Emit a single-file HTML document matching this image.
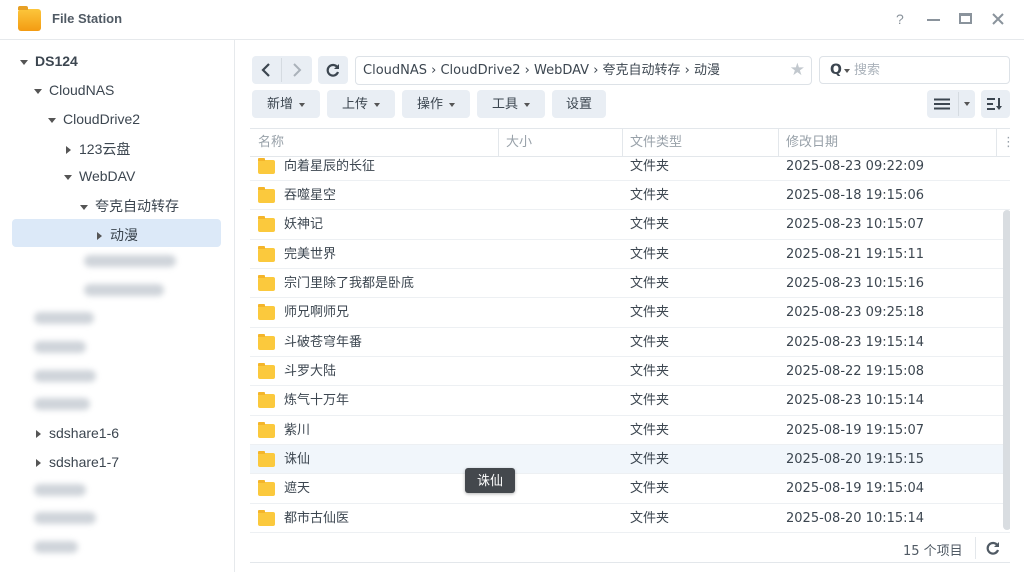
<!DOCTYPE html>
<html><head><meta charset="utf-8"><style>
*{margin:0;padding:0;box-sizing:border-box}
body{width:1024px;height:572px;overflow:hidden;background:#fff;font-family:"Liberation Sans","Noto Sans CJK SC",sans-serif;color:#505a64;position:relative}
.abs{position:absolute}
.dv{font-family:"DejaVu Sans","Noto Sans CJK SC",sans-serif}
.title{left:0;top:0;width:1024px;height:40px;border-bottom:1px solid #e6e9ec}
.side{left:0;top:40px;width:235px;height:532px;border-right:1px solid #e6e9ec}
.tr{position:absolute;font-size:14px;color:#3c4650;white-space:nowrap}
.tri{display:inline-block;width:0;height:0;border-left:4px solid transparent;border-right:4px solid transparent;border-top:5px solid #555;margin-right:7px;vertical-align:middle}
.trr{display:inline-block;width:0;height:0;border-top:4px solid transparent;border-bottom:4px solid transparent;border-left:5px solid #555;margin-right:8px;vertical-align:middle}
.blur{position:absolute;height:12px;background:#cfd4da;border-radius:6px;filter:blur(3px)}
.btn{position:absolute;height:28px;background:#e9eef4;border-radius:4px;font-size:13px;color:#3c4650;text-align:center;line-height:28px}
.car{display:inline-block;border-left:3px solid transparent;border-right:3px solid transparent;border-top:4px solid #555;vertical-align:middle;margin-left:6px}
.row{position:absolute;left:250px;width:760px;height:29.33px;border-bottom:1px solid #edf0f3;font-size:13px;color:#3c4650;line-height:29px}
.row span{position:absolute}
.fold{position:absolute;left:8px;top:8px;width:17px;height:14px;background:#fbc93d;border-radius:2px}
.fold:before{content:"";position:absolute;left:0;top:-2px;width:7px;height:3px;background:#f4b52a;border-radius:1px 1px 0 0}
</style></head><body>
<div class="abs title">
 <div class="abs" style="left:18px;top:9px;width:23px;height:22px;background:linear-gradient(#fcc63c,#f39b12);border-radius:3px"></div>
 <div class="abs" style="left:18px;top:6px;width:10px;height:4px;background:#e7a024;border-radius:2px 2px 0 0"></div>
 <div class="abs" style="left:52px;top:11px;font-size:13px;font-weight:bold;color:#505a64">File Station</div>
 <div class="abs" style="left:896px;top:11px;font-size:14px;color:#8a939c">?</div>
 <div class="abs" style="left:927px;top:19px;width:13px;height:2px;background:#8a939c"></div>
 <div class="abs" style="left:959px;top:13px;width:13px;height:11px;border:2px solid #8a939c;border-top-width:3px"></div>
 <svg class="abs" style="left:992px;top:13px" width="12" height="12"><path d="M1 1L11 11M11 1L1 11" stroke="#8a939c" stroke-width="2"/></svg>
</div>
<div class="abs side">
 <div class="tr" style="left:20px;top:13px;font-weight:bold;font-size:14px"><span class="tri"></span>DS124</div>
 <div class="tr" style="left:34px;top:42px"><span class="tri"></span>CloudNAS</div>
 <div class="tr" style="left:48px;top:71px"><span class="tri"></span>CloudDrive2</div>
 <div class="tr" style="left:66px;top:99px"><span class="trr"></span>123云盘</div>
 <div class="tr" style="left:64px;top:128px"><span class="tri"></span>WebDAV</div>
 <div class="tr" style="left:80px;top:156px"><span class="tri"></span>夸克自动转存</div>
 <div class="abs" style="left:12px;top:179px;width:209px;height:28px;background:#dce9f8;border-radius:4px"></div>
 <div class="tr" style="left:97px;top:185px"><span class="trr"></span>动漫</div>
 <div class="blur" style="left:84px;top:215px;width:92px"></div>
 <div class="blur" style="left:84px;top:244px;width:80px"></div>
 <div class="blur" style="left:34px;top:272px;width:60px"></div>
 <div class="blur" style="left:34px;top:301px;width:52px"></div>
 <div class="blur" style="left:34px;top:330px;width:62px"></div>
 <div class="blur" style="left:34px;top:358px;width:56px"></div>
 <div class="tr" style="left:36px;top:385px"><span class="trr"></span>sdshare1-6</div>
 <div class="tr" style="left:36px;top:414px"><span class="trr"></span>sdshare1-7</div>
 <div class="blur" style="left:34px;top:444px;width:52px"></div>
 <div class="blur" style="left:34px;top:472px;width:62px"></div>
 <div class="blur" style="left:34px;top:501px;width:44px"></div>
</div>
<div class="btn" style="left:252px;top:56px;width:60px;"></div>
<div class="abs" style="left:281px;top:58px;width:1px;height:24px;background:#d5dbe1"></div>
<svg class="abs" style="left:260px;top:63px" width="12" height="14"><path d="M9 1L3 7L9 13" fill="none" stroke="#3c4650" stroke-width="2.2"/></svg>
<svg class="abs" style="left:291px;top:63px" width="12" height="14"><path d="M3 1L9 7L3 13" fill="none" stroke="#aab2ba" stroke-width="2"/></svg>
<div class="btn" style="left:318px;top:56px;width:30px"></div>
<svg class="abs" style="left:326px;top:63px" width="14" height="14"><path d="M11.5 4.5A5.3 5.3 0 1 0 12 9" fill="none" stroke="#3c4650" stroke-width="2.2"/><path d="M13 1V6H8Z" fill="#3c4650"/></svg>
<div class="abs dv" style="left:355px;top:56px;width:457px;height:29px;border:1px solid #dde2e7;border-radius:4px;font-size:13px;color:#3c4650;line-height:27px;padding-left:7px;white-space:nowrap">CloudNAS › CloudDrive2 › WebDAV › 夸克自动转存 › 动漫<span style="position:absolute;right:6px;top:0;color:#c2c8ce;font-size:17px">★</span></div>
<div class="abs dv" style="left:819px;top:56px;width:191px;height:28px;border:1px solid #dde2e7;border-radius:4px;font-size:13px;color:#aab2ba;line-height:26px;padding-left:10px"><b style="color:#3c4650;font-size:14px">Q</b><span class="car" style="margin-left:2px"></span> 搜索</div>
<div class="btn" style="left:252px;top:90px;width:68px">新增<span class="car"></span></div>
<div class="btn" style="left:327px;top:90px;width:68px">上传<span class="car"></span></div>
<div class="btn" style="left:402px;top:90px;width:68px">操作<span class="car"></span></div>
<div class="btn" style="left:477px;top:90px;width:68px">工具<span class="car"></span></div>
<div class="btn" style="left:552px;top:90px;width:54px">设置</div>
<div class="btn" style="left:927px;top:90px;width:48px"></div>
<svg class="abs" style="left:934px;top:98px" width="16" height="12"><path d="M0 1.5H16M0 6H16M0 10.5H16" stroke="#3c4650" stroke-width="2"/></svg>
<div class="abs" style="left:958px;top:92px;width:1px;height:24px;background:#d5dbe1"></div>
<span class="car abs" style="left:958px;top:102px"></span>
<div class="btn" style="left:981px;top:90px;width:29px"></div>
<svg class="abs" style="left:987px;top:97px" width="17" height="14"><path d="M0 2H8M0 7H6M0 12H8" stroke="#3c4650" stroke-width="2"/><path d="M12 1V10" stroke="#3c4650" stroke-width="2"/><path d="M9 9H15L12 13Z" fill="#3c4650"/></svg>
<div class="abs dv" style="left:250px;top:128px;width:760px;height:29px;border-top:1px solid #e3e7eb;border-bottom:1px solid #e3e7eb;font-size:13px;color:#98a1a9;line-height:28px">
 <span class="abs" style="left:8px">名称</span><span class="abs" style="left:248px;top:0;width:1px;height:28px;background:#e3e7eb"></span>
 <span class="abs" style="left:256px">大小</span><span class="abs" style="left:372px;top:0;width:1px;height:28px;background:#e3e7eb"></span>
 <span class="abs" style="left:380px">文件类型</span><span class="abs" style="left:528px;top:0;width:1px;height:28px;background:#e3e7eb"></span>
 <span class="abs" style="left:536px">修改日期</span><span class="abs" style="left:746px;top:0;width:1px;height:28px;background:#e3e7eb"></span>
 <span class="abs" style="left:752px">⋮</span>
</div>
<div class="abs dv" style="left:250px;top:157px;width:760px;height:376px;overflow:hidden">
<div style="position:relative;top:-5.3px">
<div class="row" style="left:0;top:0"><i class="fold"></i><span style="left:34px">向着星辰的长征</span><span style="left:380px">文件夹</span><span style="left:536px">2025-08-23 09:22:09</span></div>
<div class="row" style="left:0;top:29.33px"><i class="fold"></i><span style="left:34px">吞噬星空</span><span style="left:380px">文件夹</span><span style="left:536px">2025-08-18 19:15:06</span></div>
<div class="row" style="left:0;top:58.67px"><i class="fold"></i><span style="left:34px">妖神记</span><span style="left:380px">文件夹</span><span style="left:536px">2025-08-23 10:15:07</span></div>
<div class="row" style="left:0;top:88px"><i class="fold"></i><span style="left:34px">完美世界</span><span style="left:380px">文件夹</span><span style="left:536px">2025-08-21 19:15:11</span></div>
<div class="row" style="left:0;top:117.33px"><i class="fold"></i><span style="left:34px">宗门里除了我都是卧底</span><span style="left:380px">文件夹</span><span style="left:536px">2025-08-23 10:15:16</span></div>
<div class="row" style="left:0;top:146.67px"><i class="fold"></i><span style="left:34px">师兄啊师兄</span><span style="left:380px">文件夹</span><span style="left:536px">2025-08-23 09:25:18</span></div>
<div class="row" style="left:0;top:176px"><i class="fold"></i><span style="left:34px">斗破苍穹年番</span><span style="left:380px">文件夹</span><span style="left:536px">2025-08-23 19:15:14</span></div>
<div class="row" style="left:0;top:205.33px"><i class="fold"></i><span style="left:34px">斗罗大陆</span><span style="left:380px">文件夹</span><span style="left:536px">2025-08-22 19:15:08</span></div>
<div class="row" style="left:0;top:234.67px"><i class="fold"></i><span style="left:34px">炼气十万年</span><span style="left:380px">文件夹</span><span style="left:536px">2025-08-23 10:15:14</span></div>
<div class="row" style="left:0;top:264px"><i class="fold"></i><span style="left:34px">紫川</span><span style="left:380px">文件夹</span><span style="left:536px">2025-08-19 19:15:07</span></div>
<div class="row" style="left:0;top:293.33px;background:#f1f6fb"><i class="fold"></i><span style="left:34px">诛仙</span><span style="left:380px">文件夹</span><span style="left:536px">2025-08-20 19:15:15</span></div>
<div class="row" style="left:0;top:322.67px"><i class="fold"></i><span style="left:34px">遮天</span><span style="left:380px">文件夹</span><span style="left:536px">2025-08-19 19:15:04</span></div>
<div class="row" style="left:0;top:352px"><i class="fold"></i><span style="left:34px">都市古仙医</span><span style="left:380px">文件夹</span><span style="left:536px">2025-08-20 10:15:14</span></div>
</div>
<div class="abs" style="left:753px;top:53px;width:8px;height:320px;background:#d9dde1;border-radius:4px"></div>
</div>
<div class="abs" style="left:465px;top:468px;width:50px;height:25px;background:#44484d;border-radius:3px;color:#fff;font-size:13px;line-height:25px;text-align:center;box-shadow:0 1px 3px rgba(0,0,0,.3)">诛仙</div>
<div class="abs dv" style="left:903px;top:540px;font-size:13px;color:#505a64">15 个项目</div>
<div class="abs" style="left:975px;top:537px;width:1px;height:22px;background:#e3e7eb"></div>
<svg class="abs" style="left:986px;top:541px" width="14" height="14"><path d="M11.5 4.5A5.3 5.3 0 1 0 12 9" fill="none" stroke="#505a64" stroke-width="2.2"/><path d="M13 1V6H8Z" fill="#505a64"/></svg>
<div class="abs" style="left:250px;top:562px;width:760px;height:1px;background:#e3e7eb"></div>
</body></html>
